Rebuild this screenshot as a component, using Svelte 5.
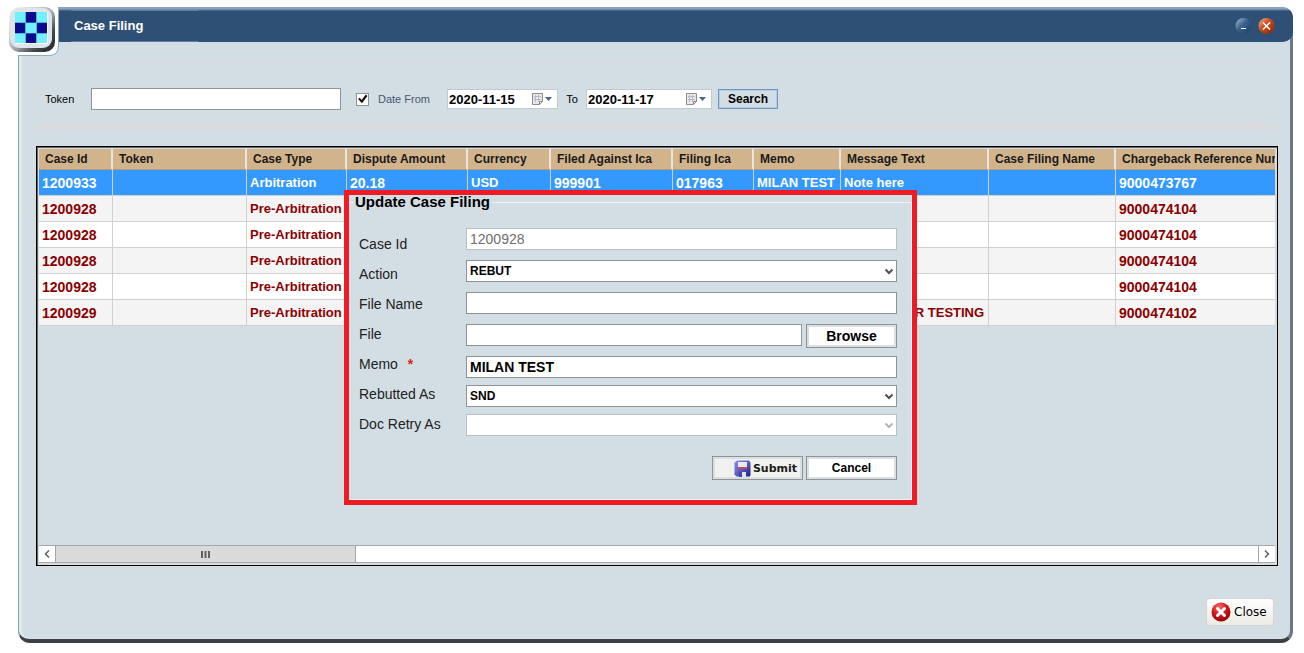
<script lang="ts">
	type Row = {
		id: string;
		type: string;
		amount?: string;
		currency?: string;
		against?: string;
		filing?: string;
		memo?: string;
		message?: string;
		reference: string;
	};

	const columns = [
		{ title: 'Case Id', width: 74 },
		{ title: 'Token', width: 134 },
		{ title: 'Case Type', width: 100 },
		{ title: 'Dispute Amount', width: 121 },
		{ title: 'Currency', width: 83 },
		{ title: 'Filed Against Ica', width: 122 },
		{ title: 'Filing Ica', width: 81 },
		{ title: 'Memo', width: 87 },
		{ title: 'Message Text', width: 148 },
		{ title: 'Case Filing Name', width: 127 },
		{ title: 'Chargeback Reference Number', width: 220 }
	];

	const rows: Row[] = [
		{
			id: '1200933',
			type: 'Arbitration',
			amount: '20.18',
			currency: 'USD',
			against: '999901',
			filing: '017963',
			memo: 'MILAN TEST',
			message: 'Note here',
			reference: '9000473767'
		},
		{ id: '1200928', type: 'Pre-Arbitration', reference: '9000474104' },
		{ id: '1200928', type: 'Pre-Arbitration', reference: '9000474104' },
		{ id: '1200928', type: 'Pre-Arbitration', reference: '9000474104' },
		{ id: '1200928', type: 'Pre-Arbitration', reference: '9000474104' },
		{ id: '1200929', type: 'Pre-Arbitration', message: 'NOTICE FOR TESTING', reference: '9000474102' }
	];

	let selected = $state(0);
	let token = $state('');
	let useDates = $state(true);
	let dateFrom = $state('2020-11-15');
	let dateTo = $state('2020-11-17');
	let action = $state('REBUT');
	let fileName = $state('');
	let file = $state('');
	let memo = $state('MILAN TEST');
	let rebuttedAs = $state('SND');
</script>

{#snippet calendar()}
	<svg width="22" height="14" viewBox="0 0 22 14" aria-hidden="true">
		<path d="M1.5 1.5h10v8l-3 3h-7z" fill="#e9e7ea" stroke="#8f8a91" />
		<path d="M3 4.5h7M3 7.5h7M4.5 3v7M7.5 3v7" stroke="#b9b9c4" />
		<path d="M11.5 9.5h-3v3z" fill="#fff" stroke="#8f8a91" />
		<path d="M14 5h7l-3.5 4z" fill="#4c6488" />
	</svg>
{/snippet}

{#snippet chevron()}
	<svg class="chevron" width="10" height="8" viewBox="0 0 10 8" aria-hidden="true">
		<path d="M1.5 1.5L5 5l3.5-3.5" fill="none" stroke="currentColor" stroke-width="2" />
	</svg>
{/snippet}

<div class="window">
	<div class="badge">
		<svg width="59" height="56" viewBox="0 0 59 56" aria-hidden="true">
			<defs>
				<linearGradient id="bevel" x1="0" y1="0" x2="1" y2="1">
					<stop offset="0.1" stop-color="#eef3f5" />
					<stop offset="0.5" stop-color="#aab2b8" />
					<stop offset="0.75" stop-color="#444a50" />
					<stop offset="1" stop-color="#222" />
				</linearGradient>
			</defs>
			<path d="M0 0H58V46Q58 55 49 55H0z" fill="#fff" />
			<path d="M58.5 8V46Q58.5 55.5 49 55.5H18" fill="none" stroke="#8fa9cd" />
			<rect x="9" y="7" width="46" height="45" rx="10" fill="url(#bevel)" />
			<rect x="10" y="8" width="42" height="40" rx="9" fill="#dde5e9" />
			<rect x="15" y="12" width="33" height="32" fill="#fff" />
			<rect x="15" y="12" width="32" height="31" fill="#73f0ff" />
			<path d="M26 12h10v11H26zM15 23h10v10H15zM37 23h10v10H37zM26 33h10v10H26z" fill="#0b0b8d" />
			<path d="M25.5 12v31M36.500 12v31M15 22.500h32M15 33.500h32" stroke="#3d8fc4" opacity="0.6" />
		</svg>
	</div>

	<header class="titlebar">
		<h1>Case Filing</h1>
		<div class="window-buttons">
			<button aria-label="Minimize">
				<svg width="17" height="18" viewBox="0 0 17 18">
					<defs>
						<linearGradient id="blue-ball" x1="0" y1="0" x2="1" y2="1">
							<stop offset="0" stop-color="#a9bcd3" />
							<stop offset="0.45" stop-color="#3a5f8d" />
							<stop offset="1" stop-color="#1d3a63" />
						</linearGradient>
					</defs>
					<circle cx="8.5" cy="9" r="8" fill="url(#blue-ball)" />
					<path d="M6 11.5h5" stroke="#fff" />
				</svg>
			</button>
			<button aria-label="Close window">
				<svg width="17" height="18" viewBox="0 0 17 18">
					<defs>
						<linearGradient id="red-ball" x1="0" y1="0" x2="1" y2="1">
							<stop offset="0" stop-color="#f3b79b" />
							<stop offset="0.4" stop-color="#d4521f" />
							<stop offset="1" stop-color="#7e2104" />
						</linearGradient>
					</defs>
					<circle cx="8.5" cy="9" r="8" fill="url(#red-ball)" />
					<path d="M5 5.5l7 7M12 5.5l-7 7" stroke="#fff" stroke-width="1.5" />
				</svg>
			</button>
		</div>
	</header>

	<main class="panel">
		<form class="filter" onsubmit={(e) => e.preventDefault()}>
			<label class="token-label" for="token">Token</label>
			<input id="token" class="token" type="text" bind:value={token} />
			<div class="check">
				<input id="use-dates" type="checkbox" bind:checked={useDates} />
				<label for="use-dates">Date From</label>
			</div>
			<div class="date">
				<input type="text" aria-label="Date from" bind:value={dateFrom} />
				<button type="button" aria-label="Pick start date">{@render calendar()}</button>
			</div>
			<label class="to" for="date-to">To</label>
			<div class="date date-wide">
				<input id="date-to" type="text" bind:value={dateTo} />
				<button type="button" aria-label="Pick end date">{@render calendar()}</button>
			</div>
			<button class="search">Search</button>
		</form>

		<div class="grid-box">
			<div class="grid-view">
				<table>
					<colgroup>
						{#each columns as col}
							<col style="width: {col.width}px" />
						{/each}
					</colgroup>
					<thead>
						<tr>
							{#each columns as col}
								<th>{col.title}</th>
							{/each}
						</tr>
					</thead>
					<tbody>
						{#each rows as row, i}
							<tr class:selected={selected === i} onclick={() => (selected = i)}>
								<td class="num">{row.id}</td>
								<td></td>
								<td>{row.type}</td>
								<td class="num">{row.amount ?? ''}</td>
								<td>{row.currency ?? ''}</td>
								<td class="num">{row.against ?? ''}</td>
								<td class="num">{row.filing ?? ''}</td>
								<td>{row.memo ?? ''}</td>
								<td>{row.message ?? ''}</td>
								<td></td>
								<td class="num">{row.reference}</td>
							</tr>
						{/each}
					</tbody>
				</table>
			</div>

			<div class="scrollbar">
				<button aria-label="Scroll left">
					<svg width="8" height="10" viewBox="0 0 8 10">
						<path d="M6 1.5L2.5 5 6 8.5" fill="none" stroke="#606060" stroke-width="1.5" />
					</svg>
				</button>
				<div class="track">
					<div class="thumb">
						<svg width="9" height="7" viewBox="0 0 9 7">
							<path d="M1 0v7M4.5 0v7M8 0v7" stroke="#606060" stroke-width="2" />
						</svg>
					</div>
				</div>
				<button aria-label="Scroll right">
					<svg width="8" height="10" viewBox="0 0 8 10">
						<path d="M2 1.5L5.5 5 2 8.5" fill="none" stroke="#606060" stroke-width="1.5" />
					</svg>
				</button>
			</div>

			<form class="dialog" onsubmit={(e) => e.preventDefault()}>
				<fieldset>
					<legend>Update Case Filing</legend>
					<div class="form">
						<div class="labels">
							<label for="case-id">Case Id</label>
							<label for="action">Action</label>
							<label for="file-name">File Name</label>
							<label for="file">File</label>
							<label for="memo">Memo <span class="required">*</span></label>
							<label for="rebutted">Rebutted As</label>
							<label for="retry">Doc Retry As</label>
						</div>
						<div class="fields">
							<input id="case-id" type="text" value="1200928" disabled />
							<div class="select">
								<select id="action" bind:value={action}>
									<option>REBUT</option>
								</select>
								{@render chevron()}
							</div>
							<input id="file-name" type="text" bind:value={fileName} />
							<div class="file">
								<input id="file" type="text" bind:value={file} />
								<button type="button" class="btn browse">Browse</button>
							</div>
							<input id="memo" type="text" bind:value={memo} />
							<div class="choices">
								<div class="select">
									<select id="rebutted" bind:value={rebuttedAs}>
										<option>SND</option>
									</select>
									{@render chevron()}
								</div>
								<div class="select disabled">
									<select id="retry" disabled></select>
									{@render chevron()}
								</div>
							</div>
						</div>
					</div>
					<div class="actions">
						<button class="btn submit">
							<svg width="17" height="17" viewBox="0 0 17 17" aria-hidden="true">
								<defs>
									<linearGradient id="disk" x1="0" y1="0" x2="1" y2="1">
										<stop offset="0" stop-color="#8f90e6" />
										<stop offset="0.5" stop-color="#5a5bc4" />
										<stop offset="1" stop-color="#1e1e78" />
									</linearGradient>
								</defs>
								<path d="M3 0.5h12l1.5 2v13l-1 1h-13l-2-2v-12z" fill="url(#disk)" />
								<path d="M4 2h9v7H4z" fill="#e6e9f8" />
								<path d="M4 7h9v2H4z" fill="#c64a55" />
								<path d="M5 12h7v5H5z" fill="#dfe2f0" />
								<path d="M5 12h3v5H5z" fill="#46469c" />
							</svg>
							Submit
						</button>
						<button type="button" class="btn">Cancel</button>
					</div>
				</fieldset>
			</form>
		</div>

		<footer>
			<button class="close">
				<svg width="20" height="20" viewBox="0 0 20 20" aria-hidden="true">
					<defs>
						<radialGradient id="close-ball" cx="0.4" cy="0.25" r="0.8">
							<stop offset="0" stop-color="#f2706a" />
							<stop offset="0.5" stop-color="#d3161b" />
							<stop offset="1" stop-color="#8c0407" />
						</radialGradient>
					</defs>
					<circle cx="10" cy="10" r="9.5" fill="url(#close-ball)" />
					<path d="M6.5 6.5l7 7M13.5 6.5l-7 7" stroke="#fff" stroke-width="3" stroke-linecap="round" />
				</svg>
				Close
			</button>
		</footer>
	</main>
</div>

<style>
	:global(body) {
		background: #fff;
		font-family: 'Liberation Sans', Arial, sans-serif;
	}

	* {
		box-sizing: border-box;
	}

	input,
	select,
	button {
		font-family: inherit;
		margin: 0;
		color: #000;
	}

	svg {
		display: block;
	}

	.window {
		position: relative;
		display: flex;
		flex-direction: column;
		min-height: calc(100vh - 17px);
		margin: 7px 11px 10px 18px;
		background: #d3dee4;
		border: solid #3b4045;
		border-width: 0 3px 4px 1px;
		border-left-color: #7f9fcd;
		border-right-color: #6a7786;
		border-radius: 0 12px 12px 12px;
		box-shadow: inset 3px 0 2px #e2eaee;
	}

	.badge {
		position: absolute;
		top: -7px;
		left: -19px;
	}

	.titlebar {
		display: flex;
		align-items: center;
		justify-content: space-between;
		height: 35px;
		margin-right: -3px;
		padding: 3px 18px 0 52px;
		background: linear-gradient(#8ba1c0, #8ba1bd 2px, #2e5075 4px);
		border-radius: 0 10px 10px 0;
	}

	h1 {
		width: 127px;
		margin: 0;
		padding-left: 3px;
		border: solid #5f7da3;
		border-width: 1px 0;
		color: #fff;
		font-size: 13px;
		line-height: 30px;
	}

	.window-buttons {
		display: flex;
		gap: 6px;
	}

	.window-buttons button {
		padding: 0;
		border: none;
		background: none;
	}

	.panel {
		flex: 1;
		display: flex;
		flex-direction: column;
		margin: 21px 9px 9px 14px;
		padding: 0 2px;
		border: 1px solid #d9dcdf;
	}

	/* Search filter */
	.filter {
		display: flex;
		align-items: center;
		padding: 24px 0 13px 9px;
		border-bottom: 6px solid #dadcde;
		font-size: 11px;
	}

	.token-label {
		width: 46px;
	}

	.token {
		width: 250px;
		height: 22px;
		border: 1px solid #8e9397;
		background: #fff;
	}

	.check {
		display: flex;
		align-items: center;
		gap: 9px;
		width: 106px;
		padding-left: 15px;
		color: #46586e;
	}

	.check input {
		appearance: none;
		width: 13px;
		height: 13px;
		background: #fff;
		border: 1px solid #8e9397;
	}

	.check input:checked::before {
		content: '';
		display: block;
		height: 11px;
		background: #111;
		clip-path: polygon(10% 50%, 25% 38%, 42% 58%, 80% 10%, 95% 22%, 45% 88%);
	}

	.date {
		display: flex;
		align-items: center;
		width: 111px;
		height: 20px;
		background: #fff;
		border: 1px solid #c3c9ce;
	}

	.date-wide {
		width: 126px;
	}

	.date input {
		flex: 1;
		min-width: 0;
		padding: 0 0 0 1px;
		border: none;
		background: none;
		font-size: 13px;
		font-weight: bold;
	}

	.date button {
		padding: 0 4px 0 0;
		border: none;
		background: none;
	}

	.to {
		width: 28px;
		text-align: center;
	}

	.search {
		width: 60px;
		height: 20px;
		margin-left: 6px;
		padding: 0;
		border: 1px solid #6f97c3;
		background: #d3dee4;
		box-shadow: inset 0 0 0 1px #b5cbe0;
		font-size: 12px;
		font-weight: bold;
	}

	/* Results grid */
	.grid-box {
		position: relative;
		flex: 1;
		display: flex;
		flex-direction: column;
		min-width: 0;
		min-height: 400px;
		margin-top: 17px;
		padding: 2px;
		border: 1px solid #000;
		box-shadow: 2px 2px #d9dadc, inset 1px 1px #666;
	}

	.grid-view {
		flex: 1;
		overflow: hidden;
	}

	table {
		width: 1297px;
		table-layout: fixed;
		border-spacing: 0;
	}

	th {
		height: 21px;
		padding: 0 6px;
		background: #d2b48c;
		border-right: 2px solid #ece4da;
		border-bottom: 1px solid #b39a78;
		color: #1a1a1a;
		font-size: 12px;
		text-align: left;
		white-space: nowrap;
	}

	td {
		height: 26px;
		padding: 0 0 0 3px;
		background: #fff;
		border: solid #d0d0d0;
		border-width: 0 1px 1px 0;
		color: #8b0000;
		font-size: 13px;
		font-weight: bold;
		white-space: nowrap;
	}

	.num {
		font-size: 14px;
	}

	tr:nth-child(even) td {
		background: #f4f4f4;
	}

	tr.selected td {
		background: #39f;
		color: #fff;
	}

	.scrollbar {
		display: flex;
		height: 18px;
		border: solid #a6a6a6;
		border-width: 1px 0;
		background: #fff;
	}

	.scrollbar button {
		display: flex;
		align-items: center;
		justify-content: center;
		width: 16px;
		padding: 0;
		border: none;
		background: #fff;
	}

	.track {
		flex: 1;
		border-right: 1px solid #a6a6a6;
	}

	.thumb {
		display: flex;
		align-items: center;
		justify-content: center;
		width: 25%;
		height: 100%;
		background: #dadada;
		border: solid #a6a6a6;
		border-width: 0 1px;
	}

	/* Update dialog */
	.dialog {
		position: absolute;
		top: 43px;
		left: 307px;
		width: 573px;
		background: #d3dee4;
		border: 5px solid #ed1c24;
	}

	fieldset {
		margin: 0;
		padding: 19px 14px 19px 10px;
		border: solid #f1f5f8;
		border-width: 1px 1px 1px 0;
	}

	legend {
		margin-left: -6px;
		padding: 0 2px;
		font-size: 15px;
		font-weight: bold;
		line-height: 14px;
	}

	.form {
		display: flex;
	}

	.labels {
		display: flex;
		flex-direction: column;
		width: 107px;
		padding-top: 1px;
		color: #222;
		font-size: 14px;
		line-height: 30px;
	}

	.required {
		margin-left: 6px;
		color: #e02020;
		font-weight: bold;
	}

	.fields,
	.choices {
		display: flex;
		flex-direction: column;
	}

	.fields {
		flex: 1;
		gap: 10px;
	}

	.choices {
		gap: 7px;
		margin-top: -3px;
	}

	.fields input,
	select {
		width: 100%;
		height: 22px;
		padding: 0 3px;
		background: #fff;
		border: 1px solid #8e9397;
		border-radius: 0;
		font-size: 14px;
		font-weight: bold;
	}

	.fields input:disabled,
	select:disabled {
		border-color: #b8bec3;
		color: #6d6d6d;
		font-weight: normal;
		opacity: 1;
	}

	.select {
		position: relative;
		color: #505050;
	}

	.select select {
		display: block;
		appearance: none;
		font-size: 12px;
	}

	.select.disabled {
		color: #b4b4b4;
	}

	.select :global(.chevron) {
		position: absolute;
		top: 8px;
		right: 3px;
		pointer-events: none;
	}

	.file {
		display: flex;
		gap: 4px;
		height: 22px;
	}

	.file input {
		flex: 1;
	}

	.btn {
		width: 91px;
		height: 24px;
		padding: 0;
		background: #fff;
		border: 1px solid #8e9397;
		box-shadow: inset 0 0 0 2px #dcdfe1;
		font-size: 12px;
		font-weight: bold;
	}

	.browse {
		font-size: 14px;
	}

	.actions {
		display: flex;
		justify-content: flex-end;
		gap: 3px;
		margin-top: 17px;
	}

	.submit {
		display: flex;
		align-items: center;
		justify-content: flex-end;
		gap: 2px;
		padding-right: 5px;
		background: #f1f1ee;
		color: #1a1a1a;
		font-family: 'DejaVu Sans', Verdana, sans-serif;
		font-size: 11px;
	}

	footer {
		display: flex;
		justify-content: flex-end;
		padding: 32px 4px 3px;
	}

	.close {
		display: flex;
		align-items: center;
		gap: 3px;
		width: 68px;
		height: 28px;
		padding: 0 4px;
		background: linear-gradient(#fff, #ecebe5);
		border: 1px solid #d5d5d8;
		border-radius: 4px;
		font-family: 'DejaVu Sans', Verdana, sans-serif;
		font-size: 12px;
	}
</style>
